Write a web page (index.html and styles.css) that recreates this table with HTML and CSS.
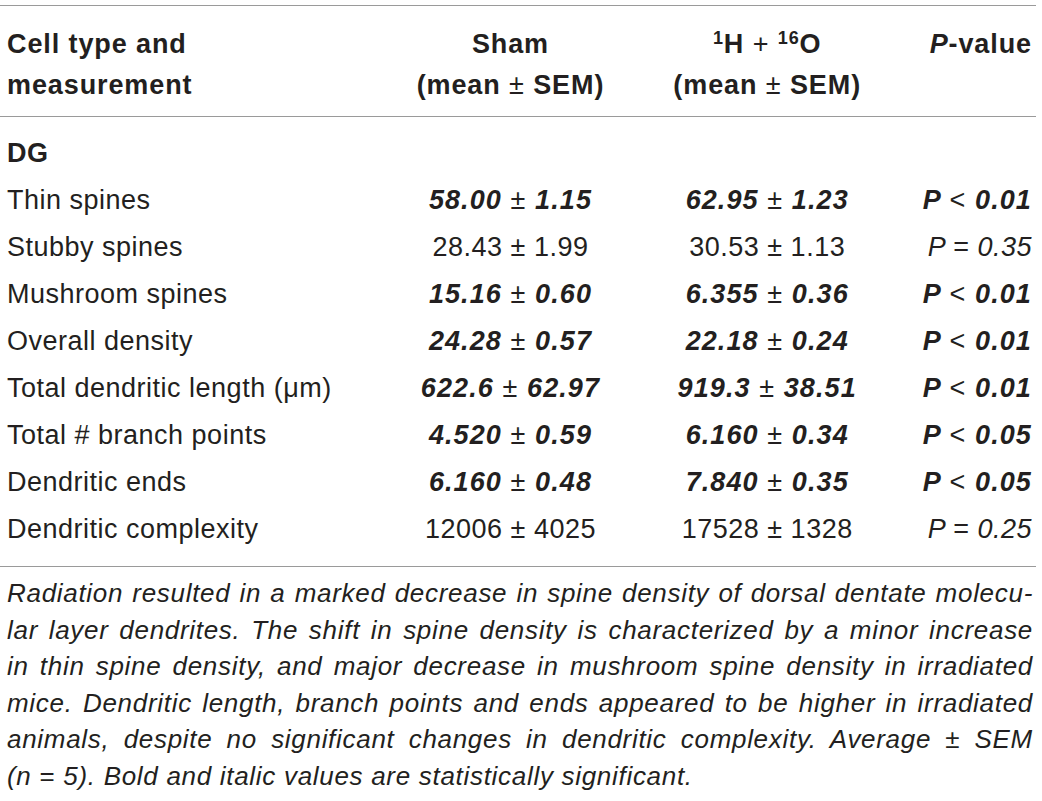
FILE: index.html
```html
<!DOCTYPE html>
<html lang="en">
<head>
    <meta charset="UTF-8" />
    <title>Dendritic spine measurements</title>
    <link rel="stylesheet" href="styles.css">
</head>
<body>
    <div class="table-wrap">
        <table class="spines">
            <thead>
                <tr>
                    <th class="label">Cell type and<br>measurement</th>
                    <th class="num">Sham<br>(mean <span class="pm">±</span> SEM)</th>
                    <th class="num"><sup>1</sup>H <span class="pm">+</span> <sup>16</sup>O<br>(mean <span class="pm">±</span> SEM)</th>
                    <th class="pval"><i>P</i>-value</th>
                </tr>
            </thead>
            <tbody>
                <tr class="group">
                    <td class="label">DG</td>
                    <td></td>
                    <td></td>
                    <td></td>
                </tr>
                <tr>
                    <td class="label">Thin spines</td>
                    <td class="num sig">58.00 <span class="pm">±</span> 1.15</td>
                    <td class="num sig">62.95 <span class="pm">±</span> 1.23</td>
                    <td class="pval sig">P <span class="op">&lt;</span> 0.01</td>
                </tr>
                <tr>
                    <td class="label">Stubby spines</td>
                    <td class="num">28.43 ± 1.99</td>
                    <td class="num">30.53 ± 1.13</td>
                    <td class="pval ns">P <span class="op">=</span> 0.35</td>
                </tr>
                <tr>
                    <td class="label">Mushroom spines</td>
                    <td class="num sig">15.16 <span class="pm">±</span> 0.60</td>
                    <td class="num sig">6.355 <span class="pm">±</span> 0.36</td>
                    <td class="pval sig">P <span class="op">&lt;</span> 0.01</td>
                </tr>
                <tr>
                    <td class="label">Overall density</td>
                    <td class="num sig">24.28 <span class="pm">±</span> 0.57</td>
                    <td class="num sig">22.18 <span class="pm">±</span> 0.24</td>
                    <td class="pval sig">P <span class="op">&lt;</span> 0.01</td>
                </tr>
                <tr>
                    <td class="label">Total dendritic length (μm)</td>
                    <td class="num sig">622.6 <span class="pm">±</span> 62.97</td>
                    <td class="num sig">919.3 <span class="pm">±</span> 38.51</td>
                    <td class="pval sig">P <span class="op">&lt;</span> 0.01</td>
                </tr>
                <tr>
                    <td class="label">Total # branch points</td>
                    <td class="num sig">4.520 <span class="pm">±</span> 0.59</td>
                    <td class="num sig">6.160 <span class="pm">±</span> 0.34</td>
                    <td class="pval sig">P <span class="op">&lt;</span> 0.05</td>
                </tr>
                <tr>
                    <td class="label">Dendritic ends</td>
                    <td class="num sig">6.160 <span class="pm">±</span> 0.48</td>
                    <td class="num sig">7.840 <span class="pm">±</span> 0.35</td>
                    <td class="pval sig">P <span class="op">&lt;</span> 0.05</td>
                </tr>
                <tr class="last">
                    <td class="label">Dendritic complexity</td>
                    <td class="num">12006 ± 4025</td>
                    <td class="num">17528 ± 1328</td>
                    <td class="pval ns">P <span class="op">=</span> 0.25</td>
                </tr>
            </tbody>
        </table>

        <p class="caption">
            <span class="line">Radiation resulted in a marked decrease in spine density of dorsal dentate molecu-</span>
            <span class="line">lar layer dendrites. The shift in spine density is characterized by a minor increase</span>
            <span class="line">in thin spine density, and major decrease in mushroom spine density in irradiated</span>
            <span class="line">mice. Dendritic length, branch points and ends appeared to be higher in irradiated</span>
            <span class="line">animals, despite no significant changes in dendritic complexity. Average <span class="upright">±</span> SEM</span>
            <span class="line end">(n <span class="upright">=</span> 5). Bold and italic values are statistically significant.</span>
        </p>
    </div>
</body>
</html>
```

FILE: styles.css
```css
body {
    margin: 0;
    background: #fff;
    color: #231f20;
    font-family: "Liberation Sans", Arial, sans-serif;
}

.table-wrap {
    width: 1036px;
    padding-top: 5px;
}

.spines {
    width: 1036px;
    border-collapse: collapse;
    table-layout: fixed;
    font-size: 27px;
    letter-spacing: 0.5px;
}

.spines thead tr {
    border-top: 1px solid #9a9a9a;
    border-bottom: 1px solid #9a9a9a;
}

.spines th {
    font-weight: 700;
    letter-spacing: 0.9px;
    line-height: 41px;
    padding: 18px 0 10px;
    vertical-align: top;
}

.spines td {
    height: 47px;
    padding: 0;
    line-height: 47px;
    white-space: nowrap;
}

.spines .label {
    width: 393px;
    padding-left: 7px;
    text-align: left;
}

.spines th:nth-child(2),
.spines td:nth-child(2) {
    width: 218px;
    text-align: center;
}

.spines th:nth-child(3),
.spines td:nth-child(3) {
    width: 294px;
    text-align: center;
}

.spines .pval {
    width: 117px;
    padding-right: 4px;
    text-align: right;
}

.spines sup {
    font-size: 18px;
    line-height: 0;
    vertical-align: 9px;
}

.spines .pm {
    font-weight: 400;
    font-style: normal;
}

.spines .group td {
    font-weight: 700;
    padding-top: 13px;
}

.spines .last td {
    padding-bottom: 13px;
}

.spines .last {
    border-bottom: 1px solid #9a9a9a;
}

.sig {
    font-weight: 700;
    font-style: italic;
    letter-spacing: 1.1px;
}

.ns {
    font-style: italic;
}

.op {
    font-weight: 400;
    font-style: normal;
}

.caption {
    margin: 0;
    padding: 8px 3px 0 7px;
    font-size: 26px;
    font-style: italic;
    line-height: 36.5px;
    letter-spacing: 0.7px;
}

.caption .line {
    display: block;
    text-align: justify;
    text-align-last: justify;
    white-space: nowrap;
}

.caption .line.end {
    text-align-last: left;
}

.caption .upright {
    font-style: normal;
}
```
